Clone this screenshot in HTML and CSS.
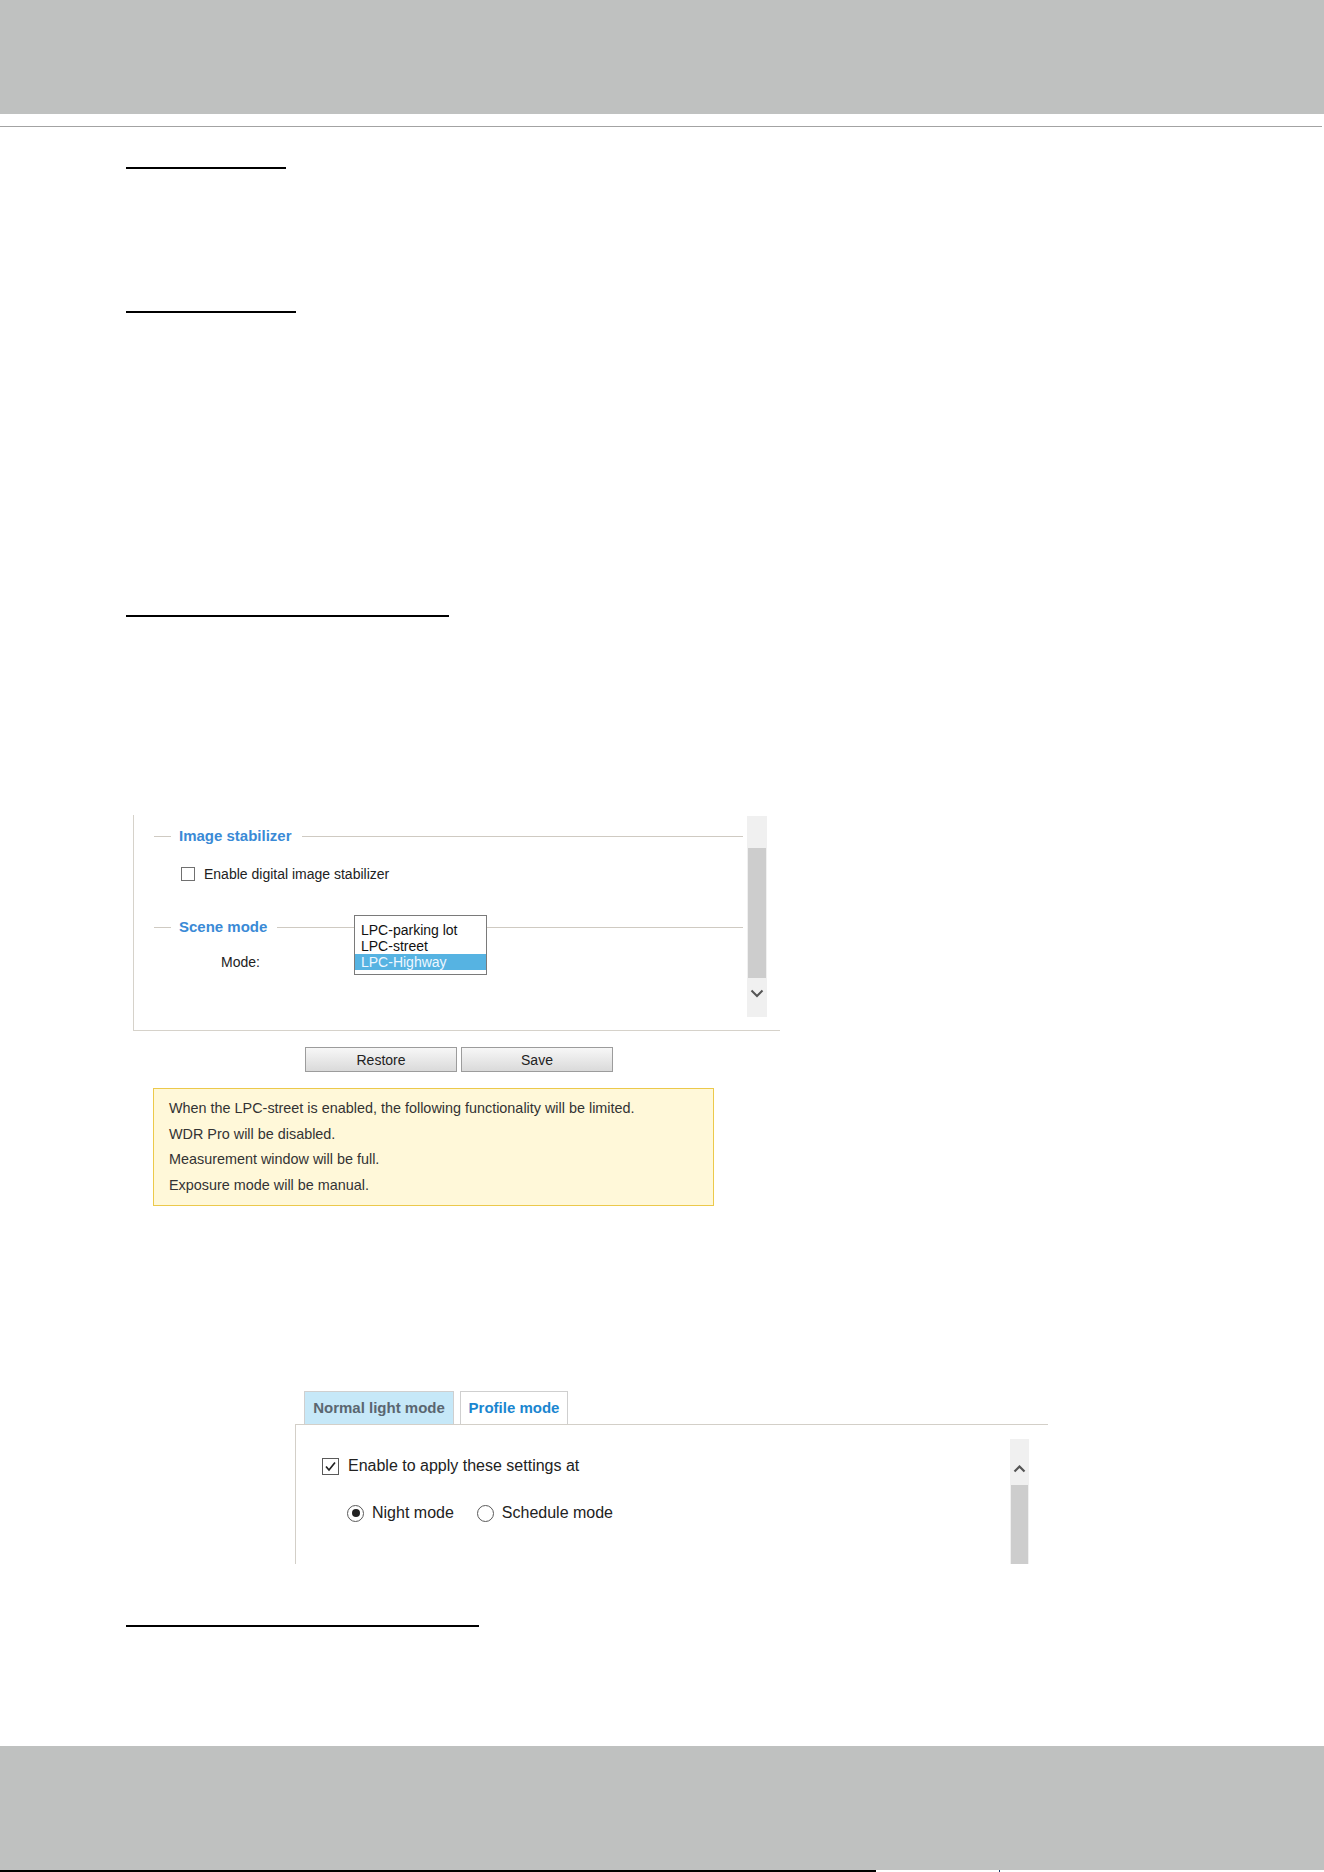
FILE: index.html
```html
<!DOCTYPE html>
<html lang="en">
<head>
<meta charset="utf-8">
<title>Image adjustment</title>
<link rel="stylesheet" href="styles.css">
</head>
<body>
<header class="masthead"></header>
<div class="masthead-rule"></div>

<main class="page">
  <div class="topic topic-a"></div>
  <div class="topic topic-b"></div>
  <div class="topic topic-c"></div>

  <section class="settings">
    <div class="settings-body">
      <div class="group-title"><span>Image stabilizer</span></div>
      <label class="check-row"><span class="box"></span>Enable digital image stabilizer</label>

      <div class="group-title scene"><span>Scene mode</span></div>
      <div class="mode-row">
        <span class="mode-label">Mode:</span>
        <ul class="listbox">
          <li>LPC-parking lot</li>
          <li>LPC-street</li>
          <li class="selected">LPC-Highway</li>
        </ul>
      </div>
    </div>
    <div class="vscroll">
      <div class="sb-gap"></div>
      <div class="sb-thumb"></div>
      <div class="sb-arrow">
        <svg width="14" height="9" viewBox="0 0 14 9"><path d="M1.5 1.5 L7 7 L12.5 1.5" fill="none" stroke="#555" stroke-width="2"/></svg>
      </div>
    </div>
  </section>

  <div class="actions">
    <button class="btn" type="button">Restore</button>
    <button class="btn" type="button">Save</button>
  </div>

  <div class="note">
    <p>When the LPC-street is enabled, the following functionality will be limited.</p>
    <p>WDR Pro will be disabled.</p>
    <p>Measurement window will be full.</p>
    <p>Exposure mode will be manual.</p>
  </div>

  <section class="tabbed">
    <div class="tabs">
      <div class="tab tab-normal">Normal light mode</div>
      <div class="tab tab-profile">Profile mode</div>
    </div>
    <div class="tab-body">
      <div class="tab-content">
        <label class="apply-row">
          <span class="tick">
            <svg width="15" height="15" viewBox="0 0 15 15"><path d="M3 7.5 L6 11 L12 3.5" fill="none" stroke="#222" stroke-width="1.7"/></svg>
          </span>
          Enable to apply these settings at
        </label>
        <div class="radio-row">
          <label class="radio-opt"><span class="radio on"></span>Night mode</label>
          <label class="radio-opt second"><span class="radio"></span>Schedule mode</label>
        </div>
      </div>
      <div class="vscroll small">
        <div class="sb-arrow up">
          <svg width="13" height="8" viewBox="0 0 13 8"><path d="M1.5 6.5 L6.5 1.5 L11.5 6.5" fill="none" stroke="#555" stroke-width="2.2"/></svg>
        </div>
        <div class="sb-thumb grow"></div>
      </div>
    </div>
  </section>

  <div class="topic topic-d"></div>
</main>

<footer class="footband"></footer>
<div class="foot-edge"><span class="edge-bar"></span><span class="edge-tick"></span></div>
</body>
</html>
```

FILE: styles.css
```css
* { box-sizing: border-box; }

html, body {
  margin: 0;
  padding: 0;
}

body {
  width: 1324px;
  height: 1872px;
  overflow: hidden;
  background: #fff;
  font-family: "Liberation Sans", Arial, sans-serif;
  color: #222;
}

/* top band */
.masthead {
  height: 114px;
  background: #bfc1c0;
}

.masthead-rule {
  margin-top: 12px;
  width: 1322px;
  height: 1px;
  background: #a3a3a3;
}

.page {
  padding-left: 126px;
}

/* section heading underlines */
.topic {
  height: 2px;
  background: #000;
}
.topic-a { margin-top: 40px; width: 160px; }
.topic-b { margin-top: 142px; width: 170px; }
.topic-c { margin-top: 302px; width: 323px; }
.topic-d { margin-top: 61px; width: 353px; }

/* image settings panel */
.settings {
  margin: 198px 0 0 7px;
  width: 647px;
  height: 216px;
  border-left: 1px solid #d6d2ca;
  border-bottom: 1px solid #d6d2ca;
  display: flex;
}

.settings-body {
  flex: 1;
  padding: 12px 4px 0 20px;
  font-size: 14px;
}

.group-title {
  display: flex;
  align-items: center;
  height: 18px;
}
.group-title::before {
  content: "";
  width: 17px;
  height: 1px;
  background: #cfcac2;
}
.group-title::after {
  content: "";
  flex: 1;
  height: 1px;
  background: #cfcac2;
}
.group-title span {
  padding: 0 10px 0 8px;
  font-size: 15px;
  font-weight: bold;
  color: #3a8ad6;
  line-height: 18px;
}
.group-title.scene {
  margin-top: 36px;
}

.check-row {
  display: flex;
  align-items: center;
  height: 16px;
  margin: 21px 0 0 27px;
  color: #222;
}
.check-row .box {
  width: 14px;
  height: 14px;
  border: 1px solid #707070;
  background: #fff;
  margin-right: 9px;
}

.mode-row {
  position: relative;
  height: 16px;
  line-height: 16px;
  margin-top: 18px;
  padding-left: 67px;
}

/* open drop-down list over the scene mode line */
.listbox {
  position: absolute;
  top: -39px;
  left: 200px;
  width: 133px;
  height: 60px;
  margin: 0;
  padding: 6px 0 4px;
  list-style: none;
  background: #fff;
  border: 1px solid #7a7a7a;
  font-size: 14px;
}
.listbox li {
  height: 16px;
  line-height: 16px;
  padding-left: 6px;
  color: #111;
}
.listbox li.selected {
  background: #56b3e2;
  color: #eef7ff;
}

/* scrollbars */
.vscroll {
  width: 20px;
  height: 201px;
  margin: 1px 13px 0 0;
  background: #f0f0f0;
  display: flex;
  flex-direction: column;
}
.sb-gap { height: 32px; }
.sb-thumb {
  height: 130px;
  margin: 0 1px;
  background: #cdcdcd;
}
.sb-arrow {
  height: 30px;
  display: flex;
  align-items: center;
  justify-content: center;
}
.vscroll.small {
  width: 19px;
  height: 125px;
  margin: 14px 19px 0 0;
}
.sb-arrow.up {
  height: 46px;
  align-items: flex-start;
  padding-top: 26px;
}
.sb-thumb.grow {
  flex: 1;
  height: auto;
}

/* buttons */
.actions {
  display: flex;
  gap: 4px;
  margin: 16px 0 0 179px;
}
.btn {
  width: 152px;
  height: 25px;
  padding: 0;
  border: 1px solid #9c9c9c;
  border-radius: 0;
  background: linear-gradient(#f7f7f7, #dadada);
  font-family: "Liberation Sans", Arial, sans-serif;
  font-size: 14px;
  color: #222;
}

/* warning note */
.note {
  margin: 16px 0 0 27px;
  width: 561px;
  padding: 7px 14px 7px 15px;
  background: #fff8d9;
  border: 1px solid #ecc94b;
  font-size: 14.4px;
  line-height: 25.5px;
  color: #333;
}
.note p {
  margin: 0;
}

/* tabbed panel */
.tabbed {
  margin: 185px 0 0 169px;
  width: 753px;
}

.tabs {
  display: flex;
  gap: 6px;
  padding-left: 9px;
  height: 34px;
  border-bottom: 1px solid #d3cfc8;
}
.tab {
  height: 33px;
  line-height: 32px;
  border: 1px solid #cfcfcf;
  border-bottom: none;
  font-size: 15px;
  font-weight: bold;
  text-align: center;
}
.tab-normal {
  width: 150px;
  background: #c6e8f8;
  color: #5a6670;
}
.tab-profile {
  width: 108px;
  background: #fff;
  color: #1a86d0;
}

.tab-body {
  display: flex;
  height: 139px;
  border-left: 1px solid #d3cfc8;
}
.tab-content {
  flex: 1;
  padding-top: 31px;
  font-size: 16px;
}

.apply-row {
  display: flex;
  align-items: center;
  height: 20px;
  margin-left: 26px;
}
.tick {
  width: 17px;
  height: 17px;
  border: 1px solid #5a5a5a;
  background: #fff;
  margin-right: 9px;
  display: flex;
  align-items: center;
  justify-content: center;
}

.radio-row {
  display: flex;
  align-items: center;
  height: 20px;
  margin-top: 27px;
  padding-left: 51px;
}
.radio-opt {
  display: flex;
  align-items: center;
}
.radio-opt.second {
  margin-left: 23px;
}
.radio {
  width: 17px;
  height: 17px;
  border: 1px solid #5a5a5a;
  border-radius: 50%;
  background: #fff;
  margin-right: 8px;
  display: flex;
  align-items: center;
  justify-content: center;
}
.radio.on::after {
  content: "";
  width: 8px;
  height: 8px;
  border-radius: 50%;
  background: #222;
}

/* bottom band */
.footband {
  margin-top: 119px;
  height: 124px;
  background: #bfc1c0;
}
.foot-edge {
  position: relative;
  height: 2px;
}
.edge-bar {
  display: block;
  width: 876px;
  height: 2px;
  background: #000;
}
.edge-tick {
  position: absolute;
  left: 999px;
  top: 0;
  width: 1px;
  height: 2px;
  background: #1b3a6b;
}
```
